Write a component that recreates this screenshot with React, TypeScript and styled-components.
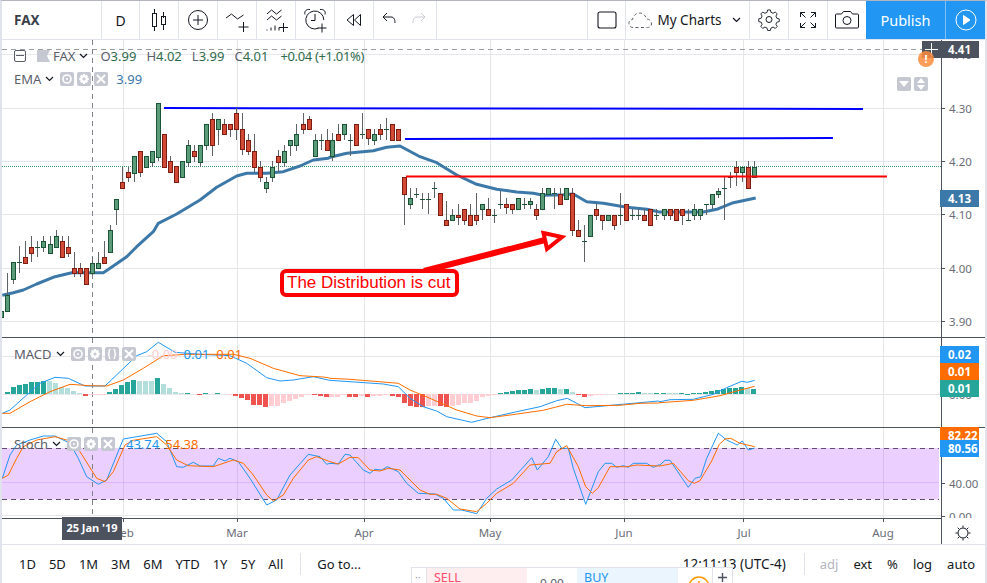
import React from "react";
import styled, { createGlobalStyle } from "styled-components";

const FONT = `"Noto Sans", "Open Sans", sans-serif`;
const GlobalStyle = createGlobalStyle`
  html, body { margin: 0; padding: 0; background: #fff; overflow: hidden; }
  * { box-sizing: border-box; }
`;

/* ---------- data ("3x" coordinates read from the chart) ---------- */
type Row = [string, number, number, number, number];
const secA: Row[] = [
  ["g",632,650,632,650],
  ["g",584,632,520,632],["g",487,536,487,552],["d",487,487,438,518],["r",472,488,422,488],["r",440,458,408,486],["d",440,440,422,470],["g",424,440,408,456],["g",433,458,408,458],["g",408,440,390,440],["r",424,472,408,472],["r",440,458,408,470],["r",505,520,456,532],["r",505,520,488,532],["r",505,553,505,553],["g",488,520,472,525],["g",488,505,456,505],["r",472,488,424,488],["g",391,457,375,457],["g",296,328,296,374],["r",247,265,200,247],["r",217,232,200,247],["g",169,218,169,245],["r",152,217,152,232],["g",169,200,169,200],["g",152,185,152,200],["g",8,170,8,182],["r",103,200,103,200],["r",184,217,168,217],["r",198,247,198,247],["g",184,232,184,232],["g",136,185,120,200],["r",152,169,136,185],["g",136,185,136,200],["g",72,136,72,150],["r",56,136,40,168],["g",56,88,56,134],["r",73,103,56,103],["r",73,88,73,110],["r",40,88,24,120],["r",88,146,40,165],["r",121,152,103,165],["r",152,200,103,215],["r",200,232,184,247],["g",247,265,232,278],["g",200,232,184,247],["r",169,185,150,215],["g",152,185,136,200],["g",121,136,120,168],["g",103,136,72,152],["r",73,88,40,103],["r",56,88,48,88],["g",121,169,103,169],["d",120,120,102,150],["r",121,150,88,150],
];
const secB: Row[] = [
  ["g",121,169,100,183],["r",103,121,72,121],["g",73,103,73,121],["d",120,120,103,167],["r",73,136,73,136],["d",103,103,40,118],["r",88,113,88,136],["g",103,121,88,136],["r",88,103,72,121],["d",88,88,55,121],["r",73,121,73,121],["r",88,121,88,121],
  ["r",232,281,232,375],["g",295,313,265,328],["d",282,282,265,295],["d",296,296,280,328],["d",296,296,280,342],["d",265,265,247,295],["r",280,344,280,344],["r",360,376,303,376],["g",344,361,328,361],["r",344,352,312,376],["r",328,361,328,376],["r",344,376,312,376],["r",344,361,280,376],["g",313,328,313,360],["r",328,344,295,344],["d",344,344,328,370],["d",313,313,272,328],["r",313,320,295,342],["r",313,328,313,342],["g",295,328,295,328],["d",312,312,295,328],["g",304,313,295,328],["r",328,344,312,360],["g",280,328,265,328],["g",265,281,265,281],["d",280,280,265,328],["r",281,313,265,313],["g",265,296,265,296],["r",280,391,265,408],["r",391,409,360,409],["d",424,424,375,485],["g",344,409,344,409],["r",328,344,312,360],["r",344,360,344,390],["g",344,360,344,360],["r",344,376,344,390],["d",344,344,280,375],["r",313,360,313,360],["d",344,344,328,360],["d",344,344,328,360],["r",344,360,328,360],["r",328,376,328,376],["d",344,344,328,360],
];
const secC: Row[] = [
  ["g",328,344,328,360],["r",328,344,328,360],["r",328,360,328,360],["r",328,344,328,374],["d",360,360,328,360],["g",328,344,312,360],["g",328,344,328,360],["d",313,313,313,344],["g",281,313,281,328],["g",272,281,265,295],["d",265,265,232,360],["d",232,232,216,264],["r",200,217,184,258],["g",200,217,200,245],["r",200,265,184,265],["g",200,232,184,232],
];

type P = [number, number];
const conv = (x0: number, y0: number, a: number[][]) => a.map(([x, y]) => [x0 + x / 3, y0 + y / 3] as P);
const line = (pts: P[]) => pts.map((p) => `${p[0].toFixed(1)},${p[1].toFixed(1)}`).join(" ");

const ema = line([
  ...conv(0, 100, [[7,586],[40,578],[70,570],[110,552],[165,530],[215,518],[310,518],[330,505],[380,470],[410,440],[460,395],[475,370],[530,342],[600,300],[650,262],[710,228],[740,220],[800,220],[850,215],[900,198],[940,180],[985,175]]),
  ...conv(330, 100, [[0,172],[50,160],[130,152],[170,142],[210,138],[270,170],[320,188],[380,225],[440,253],[500,268],[560,276],[610,280],[640,286],[700,284],[730,282],[770,305],[820,310],[890,322],[950,328],[985,335]]),
  ...conv(660, 100, [[0,336],[130,336],[170,328],[220,308],[287,294]]),
]);
const macdBlue = line([
  ...conv(0, 335, [[7,235],[30,225],[80,180],[120,145],[165,127],[205,130],[255,153],[315,153],[360,110],[410,62],[440,50],[475,22],[525,52],[600,58],[690,62],[740,85],[800,128],[840,138],[880,135],[940,125],[985,135]]),
  ...conv(330, 335, [[0,136],[60,140],[160,147],[205,155],[240,190],[280,215],[320,228],[350,245],[425,262],[480,248],[560,230],[630,215],[680,197],[712,190],[765,218],[830,212],[930,203],[985,198]]),
  ...conv(660, 335, [[0,200],[30,194],[100,193],[160,178],[200,158],[245,139],[262,142],[284,136]]),
]);
const macdOrange = line([
  ...conv(0, 335, [[7,235],[30,235],[90,200],[150,170],[210,148],[270,152],[320,153],[370,135],[430,100],[490,62],[560,58],[700,58],[750,70],[820,100],[900,122],[970,126],[985,128]]),
  ...conv(330, 335, [[0,130],[60,133],[205,145],[240,165],[300,190],[380,225],[440,243],[480,248],[540,240],[640,226],[710,208],[770,212],[870,211],[930,205],[985,204]]),
  ...conv(660, 335, [[0,203],[100,196],[180,182],[230,168],[284,154]]),
]);
const stBlue = line([
  ...conv(0, 335, [[7,430],[30,360],[50,330],[90,315],[130,303],[165,303],[210,325],[235,370],[260,425],[295,448],[320,435],[370,312],[470,295],[500,320],[530,395],[550,397],[580,382],[600,393],[640,393],[655,370],[675,378],[690,370],[715,380],[750,430],[800,510],[830,495],[870,420],[925,358],[960,365],[980,388]]),
  ...conv(330, 335, [[0,385],[25,387],[45,358],[60,360],[100,405],[120,415],[135,403],[155,405],[172,395],[205,410],[230,445],[265,475],[315,477],[340,490],[370,525],[395,525],[440,536],[470,490],[500,462],[545,435],[605,368],[622,405],[655,365],[677,313],[695,340],[715,340],[730,400],[767,508],[805,410],[825,385],[845,385],[860,397],[880,392],[895,397],[910,385],[950,385],[970,397],[985,390]]),
  ...conv(660, 335, [[0,390],[15,376],[30,376],[85,457],[105,430],[122,425],[140,370],[175,295],[200,315],[232,330],[247,318],[265,345],[284,339]]),
]);
const stOrange = line([
  ...conv(0, 335, [[7,430],[25,420],[50,370],[70,335],[110,315],[165,305],[210,318],[240,350],[290,430],[315,440],[340,410],[375,330],[400,316],[470,305],[500,330],[530,375],[565,392],[640,395],[700,375],[730,385],[760,420],[800,480],[820,498],[850,480],[880,430],[925,375],[950,365],[985,378]]),
  ...conv(330, 335, [[0,380],[25,387],[60,367],[85,368],[120,405],[150,408],[175,400],[210,405],[270,465],[300,478],[320,478],[350,490],[390,522],[440,530],[470,505],[500,475],[550,445],[600,390],[660,385],[680,350],[710,332],[745,395],[767,455],[787,475],[805,458],[840,395],[890,395],[920,390],[985,393]]),
  ...conv(660, 335, [[0,393],[40,385],[85,437],[103,445],[120,437],[155,378],[178,328],[195,312],[212,310],[240,325],[284,335]]),
]);

/* histogram: value above zero (+) or below (-), kind: g dark green, l pale green, r red, p pink */
type Bar = [number, string];
const histA: Bar[] = [[6,"g"],[20,"g"],[28,"g"],[30,"g"],[35,"g"],[37,"g"],[38,"g"],[38,"l"],[32,"l"],[22,"l"],[18,"l"],[10,"l"],[2,"l"],[-5,"r"],[-2,"p"],[-4,"p"],[-3,"p"],[5,"g"],[16,"g"],[28,"g"],[35,"g"],[42,"g"],[40,"l"],[38,"l"],[38,"l"],[48,"g"],[30,"l"],[18,"l"],[5,"l"],[2,"l"],[2,"g"],[0,"g"],[-3,"r"],[2,"g"],[0,"g"],[2,"g"],[0,"g"],[-3,"p"],[-6,"r"],[-12,"r"],[-18,"r"],[-32,"r"],[-34,"r"],[-40,"r"],[-36,"p"],[-36,"p"],[-28,"p"],[-20,"p"],[-14,"p"],[-8,"p"],[-4,"p"],[-4,"r"],[-6,"r"],[-10,"r"]];
const histB: Bar[] = [[-10,"p"],[-10,"p"],[-3,"p"],[-8,"r"],[-10,"r"],[-6,"p"],[-8,"r"],[-6,"p"],[-6,"p"],[-3,"p"],[-7,"r"],[-10,"r"],[-26,"r"],[-35,"r"],[-38,"r"],[-40,"r"],[-36,"p"],[-35,"p"],[-35,"r"],[-38,"r"],[-35,"p"],[-32,"p"],[-26,"p"],[-26,"p"],[-20,"p"],[-10,"p"],[-6,"p"],[-3,"p"],[2,"g"],[5,"g"],[8,"g"],[11,"g"],[11,"g"],[14,"g"],[11,"l"],[14,"g"],[17,"g"],[17,"g"],[14,"l"],[14,"g"],[5,"l"],[-3,"r"],[-8,"r"],[-5,"p"],[-3,"p"],[-3,"p"],[0,"g"],[0,"g"],[2,"g"],[2,"g"],[2,"g"],[5,"g"],[2,"l"],[2,"l"],[2,"g"]];
const histC: Bar[] = [[4,"g"],[3,"l"],[3,"l"],[3,"g"],[1,"g"],[4,"g"],[4,"g"],[7,"g"],[10,"g"],[12,"g"],[15,"g"],[18,"g"],[19,"g"],[22,"g"],[18,"l"],[16,"g"]];
const histColor: Record<string, string> = { g: "#26a69a", l: "#b2dfdb", r: "#ef5350", p: "#ffcdd2" };

const GRID_X = [123, 237, 364, 490, 624, 743, 883];

/* ---------- page ---------- */
const Page = styled.div`
  position: relative;
  width: 987px;
  height: 583px;
  overflow: hidden;
  display: flex;
  flex-direction: column;
  background: #fff;
  border-top: 1px solid #b2b5be;
  border-left: 2px solid #e0e3eb;
  border-right: 2px solid #e0e3eb;
  font-family: ${FONT};
  color: #131722;
`;
const TopBar = styled.header`
  display: flex;
  height: 39px;
  flex: none;
  border-bottom: 1px solid #e0e3eb;
`;
const Cell = styled.div<{ $w: number; $right?: boolean }>`
  width: ${(p) => p.$w}px;
  flex: none;
  display: flex;
  align-items: center;
  justify-content: center;
  border-right: ${(p) => (p.$right === false ? "none" : "1px solid #e0e3eb")};
  font-size: 14px;
`;
const SymbolCell = styled(Cell)`
  justify-content: flex-start;
  padding-left: 12px;
  font-weight: 700;
  font-size: 13.5px;
  color: #3b3f4a;
`;
const Spacer = styled.div`
  flex: 1;
  border-right: 1px solid #e0e3eb;
`;
const ChartsName = styled.span`
  font-size: 13.5px;
  margin: 0 10px 0 4px;
`;
const PublishButton = styled.div`
  width: 80px;
  flex: none;
  background: #2196f3;
  color: #fff;
  font-size: 14.5px;
  display: flex;
  align-items: center;
  justify-content: center;
  border-right: 1px solid #7fc1f7;
`;
const PlayButton = styled.div`
  width: 39px;
  flex: none;
  background: #2196f3;
  display: flex;
  align-items: center;
  justify-content: center;
`;

const Pane = styled.section<{ $h: number }>`
  position: relative;
  height: ${(p) => p.$h}px;
  flex: none;
`;
const Canvas = styled.svg`
  display: block;
  width: 983px;
  height: 100%;
  font-family: ${FONT};
`;
const Legend = styled.div<{ $top: number }>`
  position: absolute;
  left: 12px;
  top: ${(p) => p.$top}px;
  height: 18px;
  display: flex;
  align-items: center;
  font-size: 13px;
  line-height: 18px;
  color: #5a5e69;
  white-space: nowrap;
`;
const LegendName = styled.span`
  margin-right: 4px;
`;
const Chevron = styled.svg`
  width: 9px;
  height: 6px;
  margin-right: 6px;
  flex: none;
`;
const MiniButton = styled.span`
  width: 14px;
  height: 14px;
  margin-right: 3px;
  border-radius: 2px;
  background: #c5c8d0;
  display: inline-flex;
  align-items: center;
  justify-content: center;
  flex: none;
`;
const Value = styled.span<{ $c: string; $gap?: number; $tight?: boolean }>`
  color: ${(p) => p.$c};
  margin-left: ${(p) => p.$gap ?? 0}px;
  letter-spacing: ${(p) => (p.$tight ? "-0.35px" : "normal")};
`;
const Ohlc = styled.span<{ $gap?: number }>`
  color: #5a5e69;
  margin-left: ${(p) => p.$gap ?? 0}px;
`;
const Collapse = styled.span`
  width: 12px;
  height: 12px;
  border: 1px solid #5a5e69;
  border-radius: 2px;
  margin-right: 11px;
  position: relative;
  flex: none;
  &::after {
    content: "";
    position: absolute;
    left: 1px;
    right: 1px;
    top: 4px;
    height: 1px;
    background: #5a5e69;
  }
`;
const Flag = styled.svg`
  width: 13px;
  height: 12px;
  margin-right: 3px;
  flex: none;
`;
const Tag = styled.div<{ $top: number; $h?: number; $bg: string }>`
  position: absolute;
  left: 938px;
  top: ${(p) => p.$top}px;
  width: 39px;
  height: ${(p) => p.$h ?? 17}px;
  background: ${(p) => p.$bg};
  color: #fff;
  font-size: 11.5px;
  font-weight: 700;
  line-height: 17px;
  padding-left: 8px;
  overflow: hidden;
`;
const CrossPlus = styled.div`
  position: absolute;
  left: 920px;
  top: 1px;
  width: 18px;
  height: 17px;
  background: #4c525e;
  display: flex;
  align-items: center;
  justify-content: center;
`;
const Alert = styled.div`
  position: absolute;
  left: 916px;
  top: 11px;
  width: 16px;
  height: 16px;
  border-radius: 50%;
  background: rgba(255, 140, 60, 0.85);
  color: #fff;
  font-size: 11px;
  font-weight: 700;
  line-height: 16px;
  text-align: center;
`;
const ScaleButtons = styled.div`
  position: absolute;
  left: 895px;
  top: 37px;
  display: flex;
  gap: 3px;
`;
const ScaleButton = styled.span`
  width: 14px;
  height: 14px;
  border-radius: 2px;
  background: #c5c8d0;
  display: flex;
  align-items: center;
  justify-content: center;
`;
const Note = styled.div`
  position: absolute;
  left: 278px;
  top: 229px;
  width: 179px;
  height: 28px;
  border: 4px solid #ff0000;
  border-radius: 6px;
  background: #fff;
  color: #ff0000;
  font-family: "Liberation Sans", Arial, sans-serif;
  font-size: 17px;
  line-height: 20px;
  padding-left: 3px;
  white-space: nowrap;
`;
const DateTip = styled.div`
  position: absolute;
  left: 60px;
  top: -1px;
  width: 60px;
  height: 23px;
  background: #4c525e;
  color: #fff;
  font-size: 11px;
  font-weight: 700;
  line-height: 22px;
  text-align: center;
  white-space: nowrap;
`;
const BottomBar = styled.footer`
  position: relative;
  flex: 1;
  display: flex;
  align-items: center;
  border-top: 1px solid #e0e3eb;
  padding-left: 17px;
  font-size: 13px;
  color: #131722;
`;
const Ranges = styled.div`
  display: flex;
  gap: 13px;
`;
const VRule = styled.span<{ $ml: number; $mr: number }>`
  width: 1px;
  height: 22px;
  background: #e0e3eb;
  margin: 0 ${(p) => p.$mr}px 0 ${(p) => p.$ml}px;
  flex: none;
`;
const RightTools = styled.div`
  margin-left: auto;
  padding-right: 10px;
  display: flex;
  align-items: center;
  gap: 15px;
`;
const Clock = styled.span`
  font-size: 13.5px;
  margin-right: 3px;
  white-space: nowrap;
`;
const ClockDigits = styled.span`
  display: inline-block;
  clip-path: inset(4px 0 0 0);
`;
const Muted = styled.span`
  color: #b2b5be;
`;
const TradePanel = styled.div`
  position: absolute;
  left: 409px;
  top: 22px;
  width: 322px;
  height: 40px;
  display: flex;
  background: #fff;
  border: 1px solid #e0e3eb;
  font-size: 12.5px;
`;
const Handle = styled.div`
  width: 15px;
  flex: none;
  color: #9598a1;
  font-size: 10px;
  padding: 2px 0 0 3px;
  border-right: 1px solid #e0e3eb;
`;
const TradeSide = styled.div<{ $c: string; $bg: string; $w: number }>`
  width: ${(p) => p.$w}px;
  flex: none;
  background: ${(p) => p.$bg};
  color: ${(p) => p.$c};
  padding: 1px 0 0 7px;
  line-height: 18px;
`;
const Spread = styled.div`
  width: 50px;
  flex: none;
  text-align: center;
  color: #5a5e69;
  padding-top: 8px;
  font-size: 12px;
  line-height: 16px;
`;
const TradeIcon = styled.div`
  flex: 1;
  padding: 8px 0 0 10px;
`;
const TradePlus = styled.div`
  width: 20px;
  flex: none;
  border-left: 1px solid #e0e3eb;
  padding: 2px 0 0 4px;
`;

/* ---------- icons ---------- */
const Ico: React.FC<{ w?: number; h?: number; c?: string; children: React.ReactNode }> = ({ w = 28, h = 28, c = "#131722", children }) => (
  <svg width={w} height={h} viewBox={`0 0 ${w} ${h}`} fill="none" stroke={c} strokeWidth="1">
    {children}
  </svg>
);
const Chev = () => (
  <Chevron viewBox="0 0 9 6" fill="none" stroke="#131722" strokeWidth="1.2">
    <path d="M1 1l3.5 3.5L8 1" />
  </Chevron>
);
const Eye = () => (
  <svg width="12" height="12" viewBox="0 0 12 12" fill="none" stroke="#fff" strokeWidth="1.6">
    <circle cx="6" cy="6" r="4" />
    <circle cx="6" cy="6" r="1" fill="#fff" stroke="none" />
  </svg>
);
const Gear = () => (
  <svg width="12" height="12" viewBox="0 0 12 12" fill="#fff">
    <path fillRule="evenodd" d="M5 1h2l.3 1.4 1.2-.6 1.5 1.5-.7 1.2L10.8 5v2l-1.5.4.7 1.2-1.5 1.5-1.2-.7L7 11H5l-.3-1.6-1.2.7L2 8.6l.7-1.2L1.2 7V5l1.5-.5L2 3.3l1.5-1.5 1.2.6zM6 4.4a1.6 1.6 0 100 3.2 1.6 1.6 0 000-3.2z" />
  </svg>
);
const Close = () => (
  <svg width="12" height="12" viewBox="0 0 12 12" stroke="#fff" strokeWidth="2">
    <path d="M2 2l8 8M10 2l-8 8" />
  </svg>
);
const Braces = () => (
  <svg width="12" height="12" viewBox="0 0 12 12" fill="none" stroke="#fff" strokeWidth="1.5">
    <path d="M4.5 1.5C3 1.5 3.2 3 3.2 4.3c0 1-.6 1.7-1.4 1.7.8 0 1.4.7 1.4 1.7 0 1.3-.2 2.8 1.3 2.8M7.5 1.5c1.5 0 1.3 1.5 1.3 2.8 0 1 .6 1.7 1.4 1.7-.8 0-1.4.7-1.4 1.7 0 1.3.2 2.8-1.3 2.8" />
  </svg>
);

/* ---------- chart parts ---------- */
const Grid: React.FC<{ y0: number; y1: number; ys: number[] }> = ({ y0, y1, ys }) => (
  <g stroke="#e6e6e9" shapeRendering="crispEdges">
    {GRID_X.map((x) => (
      <line key={x} x1={x + 0.5} x2={x + 0.5} y1={y0} y2={y1} />
    ))}
    {ys.map((y) => (
      <line key={y} x1={2} x2={941} y1={y + 0.5} y2={y + 0.5} />
    ))}
  </g>
);
const Axis: React.FC<{ y0: number; y1: number; labels: [number, string][] }> = ({ y0, y1, labels }) => (
  <g>
    <line x1={941.5} x2={941.5} y1={y0} y2={y1} stroke="#4c525e" shapeRendering="crispEdges" />
    {labels.map(([y, t]) => (
      <g key={t}>
        <line x1={941} x2={945} y1={y + 0.5} y2={y + 0.5} stroke="#4c525e" shapeRendering="crispEdges" />
        <text x={949} y={y + 4.5} fontSize="11.5" fill="#6a6d78">{t}</text>
      </g>
    ))}
  </g>
);
const Candle: React.FC<{ x: number; r: Row }> = ({ x, r }) => {
  const [k, top, bot, wt, wb] = r;
  const cx = Math.round(x) + 0.5;
  const Y = (v: number) => 100 + v / 3;
  const t = Math.round(Y(top)) + 0.5;
  const b = Math.round(Y(bot)) + 0.5;
  if (k === "d") {
    return (
      <g shapeRendering="crispEdges">
        <line x1={cx} x2={cx} y1={Y(wt)} y2={Y(wb)} stroke="#5f6368" />
        <line x1={cx - 2.5} x2={cx + 2.5} y1={t} y2={t} stroke="#1c5236" />
      </g>
    );
  }
  const fill = k === "g" ? "#5a9c7a" : "#d24a36";
  const edge = k === "g" ? "#1c5236" : "#7c1d12";
  return (
    <g shapeRendering="crispEdges">
      <line x1={cx} x2={cx} y1={Y(wt)} y2={Y(wb)} stroke="#5f6368" />
      <rect x={cx - 2} y={t} width={4} height={Math.max(b - t, 2)} fill={fill} stroke={edge} />
    </g>
  );
};
const Hist: React.FC<{ x0: number; step: number; bars: Bar[] }> = ({ x0, step, bars }) => (
  <g shapeRendering="crispEdges">
    {bars.map(([v, k], i) =>
      v === 0 ? null : (
        <rect
          key={i}
          x={Math.round((x0 + i * step) / 3) - 2}
          y={v > 0 ? 394 - v / 3 : 394}
          width={5}
          height={Math.max(Math.abs(v) / 3, 1)}
          fill={histColor[k]}
        />
      )
    )}
  </g>
);
const Crosshair: React.FC<{ y0: number; y1: number }> = ({ y0, y1 }) => (
  <line x1={92.5} x2={92.5} y1={y0} y2={y1} stroke="#80838c" strokeDasharray="5 4" shapeRendering="crispEdges" />
);

export default function App() {
  return (
    <>
      <GlobalStyle />
      <Page>
        <TopBar>
          <SymbolCell $w={100}>FAX</SymbolCell>
          <Cell $w={38}>D</Cell>
          <Cell $w={39}>
            <Ico>
              <path d="M9.5 3v4M9.5 21v4M18.5 6v6M18.5 18v6" />
              <rect x="7.5" y="7.5" width="4" height="13" />
              <rect x="16.5" y="10.5" width="4" height="8" />
            </Ico>
          </Cell>
          <Cell $w={39}>
            <Ico>
              <circle cx="14" cy="14" r="9.5" />
              <path d="M14 9v10M9 14h10" />
            </Ico>
          </Cell>
          <Cell $w={39}>
            <Ico>
              <path d="M3 12l5.5-4 6 5 6-4" />
              <path d="M20.5 16v10M15.5 21h10" />
            </Ico>
          </Cell>
          <Cell $w={39}>
            <Ico>
              <path d="M5 8l4.5-4 5 4 5-4M5 14l4.5-4 5 4 5-4" />
              <path d="M5 24.5v-1M9 24.5v-3M13 24.5v-5M17 24.5v-3" />
              <path d="M21.5 17v9M17 21.5h9" />
            </Ico>
          </Cell>
          <Cell $w={39}>
            <Ico>
              <path d="M17.5 22.2A9 9 0 1122.8 14" />
              <path d="M14 8v6.5h-4" />
              <path d="M4 8.5C3 5 5.5 3 9 3.5M24 8.5c1-3.5-1.5-5.5-5-5" />
              <path d="M21 17.5v9M16.5 22h9" />
            </Ico>
          </Cell>
          <Cell $w={39}>
            <Ico>
              <path d="M13.5 8.5L7 14l6.5 5.5zM20.5 8.5L14.5 14l6 5.5z" />
            </Ico>
          </Cell>
          <Cell $w={63}>
            <svg width="50" height="28" viewBox="0 0 50 28" fill="none" strokeWidth="1">
              <path d="M7 15L3 11l4-4M3.5 11H11c3 0 4 2.5 4 6" stroke="#131722" />
              <path d="M41 15l4-4-4-4M44.5 11H37c-3 0-4 2.5-4 6" stroke="#c8cbd3" />
            </svg>
          </Cell>
          <Spacer />
          <Cell $w={38}>
            <svg width="20" height="18" viewBox="0 0 20 18" fill="none" stroke="#131722" strokeWidth="1.1">
              <rect x="1" y="1" width="18" height="16" rx="2" />
            </svg>
          </Cell>
          <Cell $w={124}>
            <svg width="25" height="18" viewBox="0 0 25 18" fill="none" stroke="#5a5e69" strokeWidth="1" strokeDasharray="3 2.5">
              <path d="M5 16.5C1.5 16.5.5 13.5 1 11.5c.5-2 2-3 3.5-3 .5-3.500 3.500-6.500 7-6.500s6 2.500 7 6c3 0 5 2.500 5 5s-2 3.500-4 3.500z" />
            </svg>
            <ChartsName>My Charts</ChartsName>
            <Chev />
          </Cell>
          <Cell $w={39}>
            <Ico>
              <path d="M12.5 4.5h3l.7 2.7 2.4 1 2.4-1.4 2.1 2.1-1.4 2.4 1 2.4 2.7.7v3l-2.7.7-1 2.4 1.4 2.4-2.1 2.1-2.4-1.4-2.4 1-.7 2.7h-3l-.7-2.7-2.4-1-2.4 1.4-2.1-2.1 1.4-2.4-1-2.4-2.7-.7v-3l2.7-.7 1-2.4-1.4-2.4 2.1-2.1 2.4 1.4 2.4-1z" transform="translate(0,-1.5) translate(1.4,1.400) scale(0.9)" />
              <circle cx="14" cy="13.5" r="3" />
            </Ico>
          </Cell>
          <Cell $w={39}>
            <Ico>
              <path d="M6.5 11V6.5H11M6.5 6.5l5 5M21.5 11V6.5H17M21.5 6.5l-5 5M6.5 17v4.5H11M6.5 21.5l5-5M21.5 17v4.5H17M21.5 21.5l-5-5" />
            </Ico>
          </Cell>
          <Cell $w={38} $right={false}>
            <Ico>
              <path d="M3.5 8.5h5l2-2.5h7l2 2.5h5a1 1 0 011 1v12a1 1 0 01-1 1h-21a1 1 0 01-1-1v-12a1 1 0 011-1z" transform="translate(0,-.5)" />
              <circle cx="14" cy="14.5" r="4" />
            </Ico>
          </Cell>
          <PublishButton>Publish</PublishButton>
          <PlayButton>
            <svg width="22" height="22" viewBox="0 0 22 22" fill="none" stroke="#fff" strokeWidth="1">
              <circle cx="11" cy="11" r="10" />
              <path d="M8.5 6.5l6.5 4.5-6.5 4.5z" fill="#fff" />
            </svg>
          </PlayButton>
        </TopBar>

        <Pane $h={298}>
          <Canvas viewBox="2 40 983 298">
            <Grid y0={40} y1={338} ys={[54, 108, 161, 214, 268, 321]} />
            <line x1={2} x2={941} y1={49.5} y2={49.5} stroke="#9a9ca3" strokeDasharray="5 4" shapeRendering="crispEdges" />
            <line x1={2} x2={941} y1={166.5} y2={166.5} stroke="#3d9a6c" strokeDasharray="1 1" shapeRendering="crispEdges" />
            <Crosshair y0={40} y1={338} />
            <polyline points={ema} fill="none" stroke="#3c78a8" strokeWidth="3" strokeLinejoin="round" />
            <line x1={164} x2={863} y1={108} y2={109} stroke="#0000ff" strokeWidth="2" />
            <line x1={405} x2={833} y1={139} y2={138} stroke="#0000ff" strokeWidth="2" />
            {secA.map((r, i) => <Candle key={i} r={r} x={(4 + i * 18.07) / 3} />)}
            {secB.map((r, i) => <Candle key={i} r={r} x={330 + (7 + i * 18) / 3} />)}
            {secC.map((r, i) => <Candle key={i} r={r} x={660 + (13 + i * 18) / 3} />)}
            <line x1={406} x2={887} y1={176.5} y2={176.5} stroke="#ff0000" strokeWidth="2" />
            <line x1={424} x2={545} y1={271} y2={240} stroke="#ff0000" strokeWidth="6" />
            <path d="M543.5 233L562 237 547 249z" fill="#fff" stroke="#ff0000" strokeWidth="4" />
            <line x1={2} x2={985} y1={337.5} y2={337.5} stroke="#4c525e" shapeRendering="crispEdges" />
            <Axis y0={40} y1={338} labels={[[54, "4.40"], [108, "4.30"], [161, "4.20"], [214, "4.10"], [268, "4.00"], [321, "3.90"]]} />
          </Canvas>
          <Legend $top={7}>
            <Collapse />
            <Flag viewBox="0 0 13 12" fill="#c5c8d0"><path d="M0 0h13l-3 6 3 6H0z" /></Flag>
            <LegendName>FAX</LegendName>
            <Chev />
            <Ohlc $gap={6}>O</Ohlc><Value $c="#2f6b4c">3.99</Value>
            <Ohlc $gap={10}>H</Ohlc><Value $c="#2f6b4c">4.02</Value>
            <Ohlc $gap={10}>L</Ohlc><Value $c="#2f6b4c">3.99</Value>
            <Ohlc $gap={10}>C</Ohlc><Value $c="#2f6b4c">4.01</Value>
            <Value $c="#2f6b4c" $gap={12} $tight>+0.04 (+1.01%)</Value>
          </Legend>
          <Legend $top={30}>
            <LegendName>EMA</LegendName>
            <Chev />
            <MiniButton><Eye /></MiniButton>
            <MiniButton><Gear /></MiniButton>
            <MiniButton><Close /></MiniButton>
            <Value $c="#3c78a8" $gap={5}>3.99</Value>
          </Legend>
          <Note>The Distribution is cut</Note>
          <ScaleButtons>
            <ScaleButton>
              <svg width="10" height="6" viewBox="0 0 10 6" fill="#fff"><path d="M0 0h10L5 6z" /></svg>
            </ScaleButton>
            <ScaleButton>
              <svg width="10" height="12" viewBox="0 0 10 12" fill="#fff"><path d="M5 0l4 5H1zM5 12l4-5H1z" /></svg>
            </ScaleButton>
          </ScaleButtons>
          <Tag $top={1} $bg="#4c525e">4.41</Tag>
          <CrossPlus>
            <svg width="13" height="13" viewBox="0 0 13 13" stroke="#fff"><path d="M6.5 0v13M0 6.5h13" /></svg>
          </CrossPlus>
          <Alert>!</Alert>
          <Tag $top={150} $bg="#3c78a8">4.13</Tag>
        </Pane>

        <Pane $h={90}>
          <Canvas viewBox="2 338 983 90">
            <Grid y0={338} y1={428} ys={[356, 394]} />
            <Crosshair y0={338} y1={428} />
            <Hist x0={20} step={18.05} bars={histA} />
            <Hist x0={994} step={18.05} bars={histB} />
            <Hist x0={1990} step={18} bars={histC} />
            <polyline points={macdBlue} fill="none" stroke="#2196f3" strokeWidth="1" />
            <polyline points={macdOrange} fill="none" stroke="#ff6d00" strokeWidth="1" />
            <line x1={2} x2={985} y1={427.5} y2={427.5} stroke="#4c525e" shapeRendering="crispEdges" />
            <Axis y0={338} y1={428} labels={[[394, "0.00"]]} />
          </Canvas>
          <Legend $top={7}>
            <LegendName>MACD</LegendName>
            <Chev />
            <MiniButton><Eye /></MiniButton>
            <MiniButton><Gear /></MiniButton>
            <MiniButton><Braces /></MiniButton>
            <MiniButton><Close /></MiniButton>
            <Value $c="#ffcdd2" $gap={9}>-0.00</Value>
            <Value $c="#2196f3" $gap={6}>0.01</Value>
            <Value $c="#ff6d00" $gap={7}>0.01</Value>
          </Legend>
          <Tag $top={8} $bg="#2196f3">0.02</Tag>
          <Tag $top={25} $bg="#ff6d00">0.01</Tag>
          <Tag $top={42} $bg="#26a69a">0.01</Tag>
        </Pane>

        <Pane $h={90}>
          <Canvas viewBox="2 428 983 90">
            <Grid y0={428} y1={518} ys={[515]} />
            <rect x={2} y={448} width={937} height={51.5} fill="#9915ff" fillOpacity="0.2" />
            <line x1={2} x2={939} y1={482.5} y2={482.5} stroke="#9915ff" strokeOpacity="0.15" />
            <line x1={2} x2={939} y1={448.5} y2={448.5} stroke="#5d4e6d" strokeDasharray="5 4" />
            <line x1={2} x2={939} y1={499.5} y2={499.5} stroke="#5d4e6d" strokeDasharray="5 4" />
            <Crosshair y0={428} y1={518} />
            <polyline points={stBlue} fill="none" stroke="#2196f3" strokeWidth="1" />
            <polyline points={stOrange} fill="none" stroke="#ff6d00" strokeWidth="1" />
            <Axis y0={428} y1={518} labels={[[483, "40.00"], [516, "0.00"]]} />
          </Canvas>
          <Legend $top={7}>
            <LegendName>Stoch</LegendName>
            <Chev />
            <MiniButton><Eye /></MiniButton>
            <MiniButton><Gear /></MiniButton>
            <MiniButton><Close /></MiniButton>
            <Value $c="#2196f3" $gap={8}>43.74</Value>
            <Value $c="#ff6d00" $gap={6}>54.38</Value>
          </Legend>
          <Tag $top={-1} $h={13} $bg="#ff6d00">82.22</Tag>
          <Tag $top={12} $bg="#2196f3">80.56</Tag>
        </Pane>

        <Pane $h={26}>
          <Canvas viewBox="2 518 983 26">
            <line x1={2} x2={941} y1={518.5} y2={518.5} stroke="#4c525e" shapeRendering="crispEdges" />
            <line x1={941.5} x2={941.5} y1={518} y2={544} stroke="#4c525e" shapeRendering="crispEdges" />
            <g stroke="#4c525e" shapeRendering="crispEdges">
              {GRID_X.map((x) => <line key={x} x1={x + 0.5} x2={x + 0.5} y1={518} y2={522} />)}
            </g>
            <g fontSize="11.5" fill="#6a6d78" textAnchor="middle">
              <text x={124} y={537}>Feb</text>
              <text x={237} y={537}>Mar</text>
              <text x={364} y={537}>Apr</text>
              <text x={490} y={537}>May</text>
              <text x={624} y={537}>Jun</text>
              <text x={744} y={537}>Jul</text>
              <text x={883} y={537}>Aug</text>
            </g>
            <g fill="none" stroke="#131722" strokeWidth="1">
              <circle cx={963} cy={533} r={5} />
              <path d="M963 525.5v2M963 538.5v2M955.5 533h2M968.5 533h2M957.7 527.7l1.5 1.5M966.8 536.8l1.5 1.5M968.3 527.7l-1.5 1.5M959.2 536.8l-1.5 1.5" />
            </g>
          </Canvas>
          <DateTip>25 Jan '19</DateTip>
        </Pane>

        <BottomBar>
          <Ranges>
            {["1D", "5D", "1M", "3M", "6M", "YTD", "1Y", "5Y", "All"].map((r) => (
              <span key={r}>{r}</span>
            ))}
          </Ranges>
          <VRule $ml={17} $mr={16} />
          <span>Go to...</span>
          <RightTools>
            <Clock><ClockDigits>12:11:13</ClockDigits> (UTC-4)</Clock>
            <VRule $ml={0} $mr={0} />
            <Muted>adj</Muted>
            <span>ext</span>
            <span>%</span>
            <span>log</span>
            <span>auto</span>
          </RightTools>
          <TradePanel>
            <Handle>··</Handle>
            <TradeSide $c="#ff4a68" $bg="#ffeef0" $w={100}>SELL</TradeSide>
            <Spread>0.00</Spread>
            <TradeSide $c="#2196f3" $bg="#eaf5fd" $w={101}>BUY</TradeSide>
            <TradeIcon>
              <svg width="22" height="22" viewBox="0 0 22 22" fill="none" stroke="#ff9800" strokeWidth="1.5">
                <circle cx="11" cy="11" r="10" />
                <path d="M11 5v7M11 14v2" />
              </svg>
            </TradeIcon>
            <TradePlus>
              <svg width="11" height="11" viewBox="0 0 11 11" stroke="#4c525e" strokeWidth="1.4"><path d="M5.5 1v9M1 5.5h9" /></svg>
            </TradePlus>
          </TradePanel>
        </BottomBar>
      </Page>
    </>
  );
}
